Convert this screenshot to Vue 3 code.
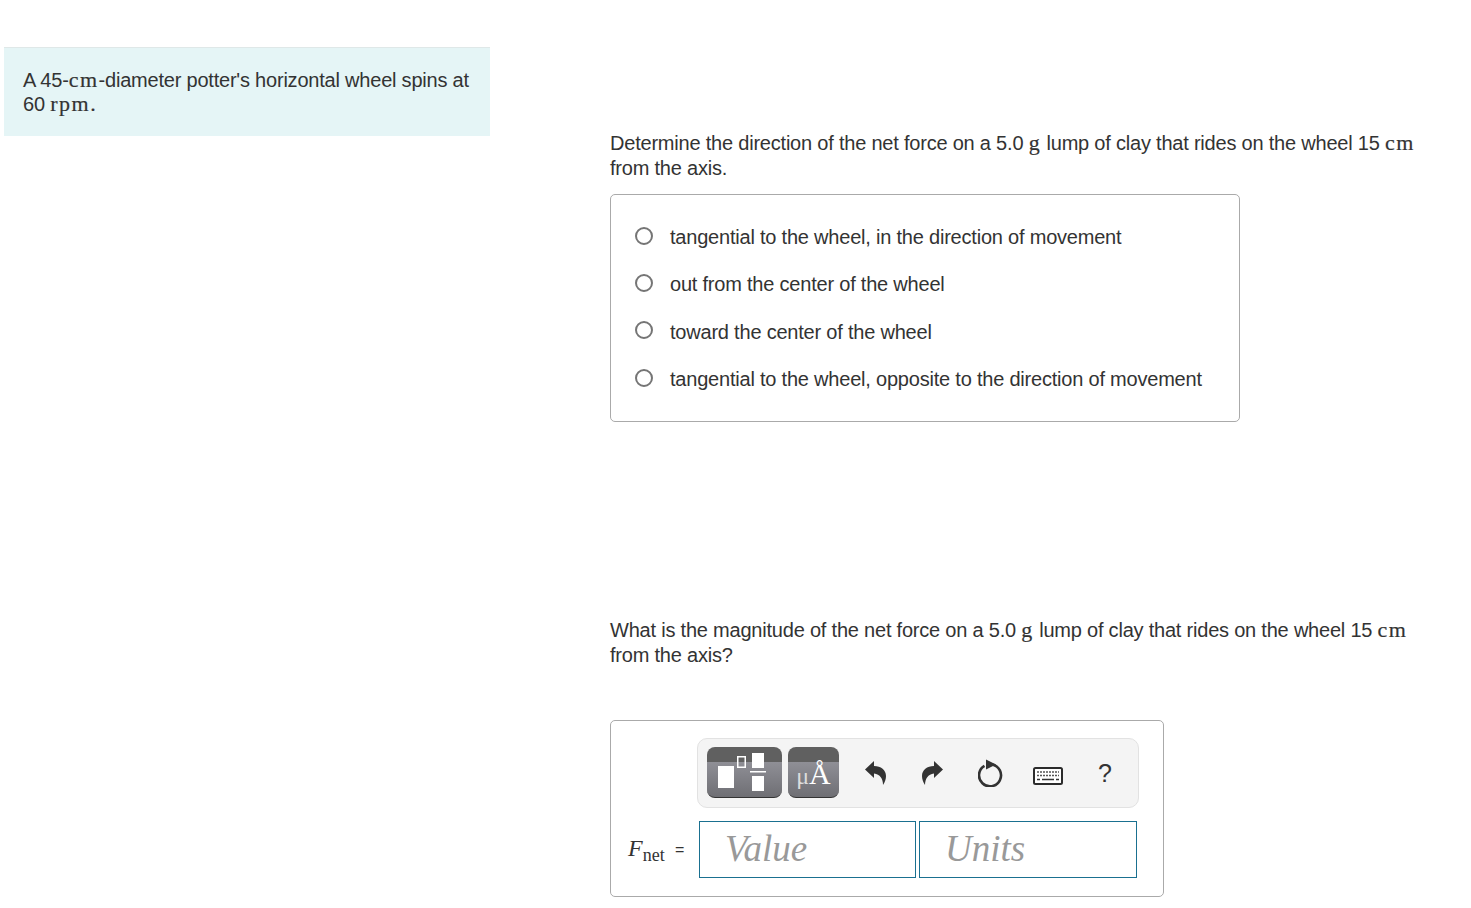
<template>
  <div class="page">
    <aside class="intro">
      <p>A 45-<span class="math">cm</span>-diameter potter's horizontal wheel spins at 60 <span class="math">rpm.</span></p>
    </aside>

    <main class="parts">
      <section class="part-a">
        <p class="question">
          Determine the direction of the net force on a 5.0 <span class="math">g</span> lump of clay that rides on the wheel 15 <span class="math">cm</span> from the axis.
        </p>
        <div class="options">
          <label v-for="opt in options" :key="opt" class="option">
            <span class="radio"></span>
            <span class="opt-text">{{ opt }}</span>
          </label>
        </div>
      </section>

      <section class="part-b">
        <p class="question">
          What is the magnitude of the net force on a 5.0 <span class="math">g</span> lump of clay that rides on the wheel 15 <span class="math">cm</span> from the axis?
        </p>
        <div class="answer-box">
          <div class="toolbar">
            <button class="tpl tpl-wide" type="button">
              <svg width="75" height="50" viewBox="0 0 75 50">
                <rect x="11" y="19" width="16" height="22" fill="#fff" />
                <rect x="30.75" y="9.75" width="7.5" height="10.5" fill="none" stroke="#fff" stroke-width="1.5" />
                <rect x="45" y="6" width="12" height="15" fill="#fff" />
                <rect x="43" y="24" width="16" height="1.5" fill="#fff" />
                <rect x="45" y="29" width="12" height="15" fill="#fff" />
              </svg>
            </button>
            <button class="tpl tpl-units" type="button">
              <span class="mu">μ</span><span class="ang">Å</span>
            </button>
            <div class="tools">
              <svg class="tool" width="24" height="26" viewBox="0 0 24 26">
                <path d="M1 9.5 L10 1 V6 C17 6 22 10 22 16 C22 19 21 22 19 25 C19 19 16 14 10 13.5 V18 Z" fill="#333" />
              </svg>
              <svg class="tool" width="24" height="26" viewBox="0 0 24 26">
                <path d="M23 9.5 L14 1 V6 C7 6 2 10 2 16 C2 19 3 22 5 25 C5 19 8 14 14 13.5 V18 Z" fill="#333" />
              </svg>
              <svg class="tool" width="26" height="28" viewBox="0 0 26 28">
                <path d="M6.5 6.8 A11 11 0 1 0 14 5.5" fill="none" stroke="#333" stroke-width="2.6" />
                <path d="M8 0.5 L18 5.5 L8 10.5 Z" fill="#333" />
              </svg>
              <svg class="tool keyboard" width="30" height="18" viewBox="0 0 30 18">
                <rect x="1" y="1" width="28" height="16" rx="1.5" fill="#fff" stroke="#2b2b2b" stroke-width="2" />
                <path d="M4 5 H26 M4 8.5 H26" stroke="#555" stroke-width="1.7" stroke-dasharray="2 1" />
                <path d="M4 12.5 H7 M9 12.5 H21 M23 12.5 H26" stroke="#333" stroke-width="1.7" />
              </svg>
              <span class="help">?</span>
            </div>
          </div>
          <div class="entry">
            <span class="label"><i>F</i><sub>net</sub></span>
            <span class="eq">=</span>
            <input class="field" type="text" placeholder="Value" />
            <input class="field units" type="text" placeholder="Units" />
          </div>
        </div>
      </section>
    </main>
  </div>
</template>

<script setup>
const options = [
  'tangential to the wheel, in the direction of movement',
  'out from the center of the wheel',
  'toward the center of the wheel',
  'tangential to the wheel, opposite to the direction of movement'
]
</script>

<style>
body {
  background: #fff;
}
</style>

<style scoped>
.page {
  display: flex;
  align-items: flex-start;
  height: 908px;
  overflow: hidden;
  font-family: "Liberation Sans", Arial, sans-serif;
  font-size: 20px;
  letter-spacing: -0.21px;
  color: #333;
}
p {
  margin: 0;
}
.math {
  font-family: "Liberation Serif", serif;
  font-size: 22px;
  line-height: 0;
  letter-spacing: 1.5px;
  -webkit-text-stroke: 0.2px #333;
}
.intro {
  box-sizing: border-box;
  width: 486px;
  height: 89px;
  margin: 47px 0 0 4px;
  padding: 20px 19px;
  line-height: 24px;
  background: #e5f5f6;
  border-top: 1px solid #dfe8e8;
}
.parts {
  width: 820px;
  margin-left: 120px;
  padding-top: 131px;
}
.question {
  line-height: 25px;
}
.options {
  box-sizing: border-box;
  width: 630px;
  height: 228px;
  margin-top: 13px;
  padding: 18px 24px;
  border: 1px solid #aaa;
  border-radius: 5px;
}
.option {
  display: flex;
  align-items: center;
  gap: 17px;
  height: 47.3px;
}
.radio {
  box-sizing: border-box;
  width: 18px;
  height: 18px;
  margin-bottom: 2px;
  border: 2px solid #757575;
  border-radius: 50%;
}
.opt-text {
  margin-top: 2px;
}
.part-b {
  margin-top: 196px;
}
.answer-box {
  box-sizing: border-box;
  width: 554px;
  height: 177px;
  margin-top: 52px;
  padding: 17px 26px 0 17px;
  border: 1px solid #aaa;
  border-radius: 5px;
}
.toolbar {
  box-sizing: border-box;
  display: flex;
  align-items: center;
  gap: 6px;
  width: 442px;
  height: 70px;
  margin-left: 69px;
  padding-left: 9px;
  background: #f4f4f4;
  border: 1px solid #e2e2e2;
  border-radius: 10px;
}
.tpl {
  display: block;
  box-sizing: border-box;
  height: 51px;
  margin-bottom: 2px;
  padding: 0;
  color: #fff;
  border: 0;
  border-radius: 8px;
  border-bottom: 1px solid #333;
  background: linear-gradient(#606060 0, #606060 15px, #8f8f96 15px, #6f6f74 100%);
}
.tpl svg {
  display: block;
}
.tpl-wide {
  width: 75px;
}
.tpl-units {
  width: 51px;
  font-family: "Liberation Serif", serif;
  letter-spacing: 0;
  padding-top: 10px;
  line-height: 30px;
}
.mu {
  font-size: 24px;
  color: #ddd;
}
.ang {
  font-size: 30px;
}
.tools {
  display: flex;
  align-items: center;
  margin-left: 14px;
}
.tool {
  display: block;
}
.tools .tool:nth-child(1) { margin-left: 5px; }
.tools .tool:nth-child(2) { margin-left: 32px; }
.tools .tool:nth-child(3) { margin-left: 34px; }
.tools .keyboard {
  margin-left: 29px;
  margin-top: 6px;
}
.help {
  margin-left: 35px;
  font-size: 25px;
  line-height: 30px;
}
.entry {
  display: flex;
  align-items: center;
  margin-top: 13px;
}
.label {
  width: 45px;
  margin-bottom: 2px;
  font-family: "Liberation Serif", serif;
  font-size: 24px;
  letter-spacing: 0;
  white-space: nowrap;
}
.label sub {
  font-size: 18px;
  line-height: 0;
  vertical-align: -5px;
}
.eq {
  box-sizing: border-box;
  width: 26px;
  padding-left: 2px;
  font-family: "Liberation Sans", sans-serif;
  font-size: 16px;
}
.field {
  box-sizing: border-box;
  width: 217px;
  height: 57px;
  padding: 0 25px 2px;
  font-family: "Liberation Serif", serif;
  font-size: 37px;
  font-style: italic;
  color: #333;
  background: #fff;
  border: 1px solid #1a7090;
  border-radius: 0;
  outline: none;
}
.field::placeholder {
  color: #999;
  opacity: 1;
}
.units {
  width: 218px;
  margin-left: 3px;
}
</style>
